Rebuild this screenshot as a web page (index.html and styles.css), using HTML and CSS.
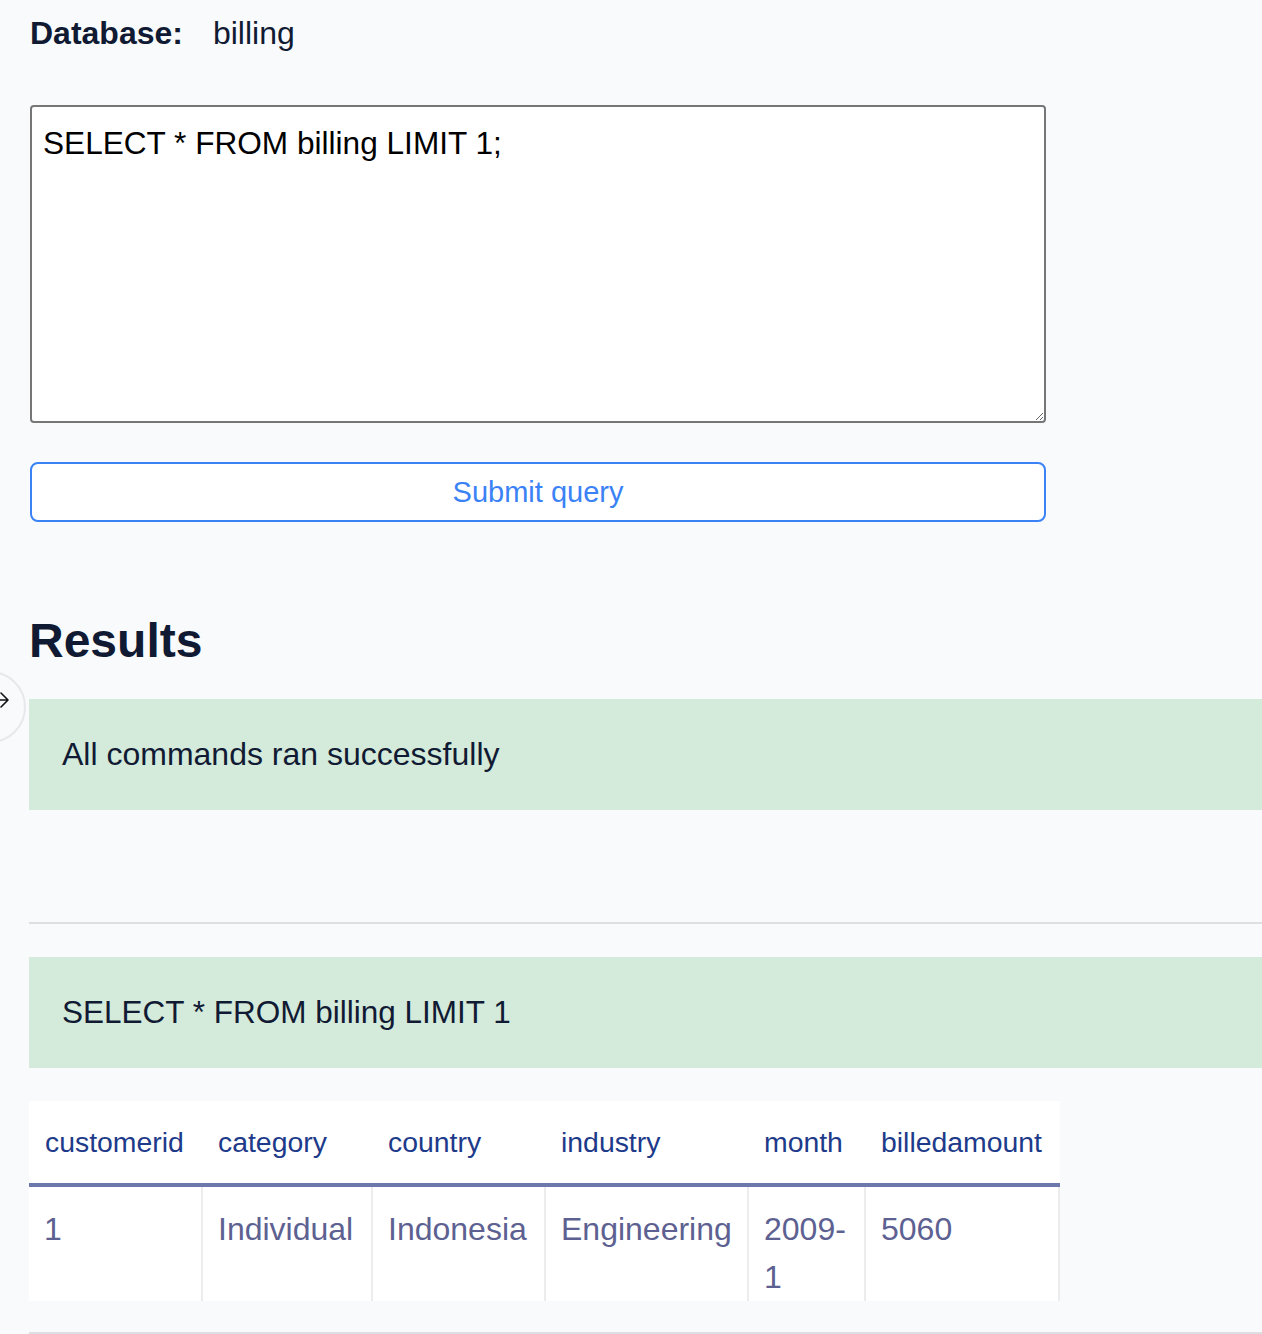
FILE: index.html
```html
<!DOCTYPE html>
<html lang="en">
<head>
<meta charset="utf-8">
<title>Query</title>
<link rel="stylesheet" href="styles.css">
</head>
<body>
<div class="side-toggle">
  <svg class="side-arrow" width="20" height="20" viewBox="0 0 20 20"><path d="M1 10 H17 M10 3 L17 10 L10 17" fill="none" stroke="#111" stroke-width="1.6" stroke-linecap="round" stroke-linejoin="round"/></svg>
</div>
<main class="page">
  <section class="form">
    <div class="db-line"><span class="db-label">Database:</span><span class="db-name">billing</span></div>
    <textarea class="query" spellcheck="false">SELECT * FROM billing LIMIT 1;</textarea>
    <button class="submit" type="button">Submit query</button>
  </section>
  <h1 class="results-title">Results</h1>
  <div class="notice">All commands ran successfully</div>
  <hr class="divider divider-1">
  <div class="notice notice-2">SELECT * FROM billing LIMIT 1</div>
  <table class="result-table">
    <colgroup>
      <col style="width:173px"><col style="width:170px"><col style="width:173px"><col style="width:203px"><col style="width:117px"><col style="width:194px">
    </colgroup>
    <thead>
      <tr><th>customerid</th><th>category</th><th>country</th><th>industry</th><th>month</th><th>billedamount</th></tr>
    </thead>
    <tbody>
      <tr><td>1</td><td>Individual</td><td>Indonesia</td><td>Engineering</td><td>2009-1</td><td>5060</td></tr>
    </tbody>
  </table>
  <hr class="divider divider-2">
</main>
</body>
</html>
```

FILE: styles.css
```css
html, body {
  margin: 0;
  padding: 0;
  background: #f9fafb;
}
body {
  font-family: "Liberation Sans", Arial, Helvetica, sans-serif;
  color: #111827;
  overflow: hidden;
  position: relative;
}
.page {
  padding-left: 29px;
  padding-top: 9px;
}
.form {
  margin-left: 1px;
  width: 1016px;
  display: flex;
  flex-direction: column;
}
.db-line {
  display: flex;
  gap: 30px;
  font-size: 32px;
  line-height: 48px;
  color: #111a33;
}
.db-label {
  font-weight: bold;
}
.query {
  margin-top: 48px;
  box-sizing: border-box;
  width: 1016px;
  height: 318px;
  border: 2px solid #767676;
  border-radius: 4px;
  background: #fff;
  padding: 12px 11px;
  font-family: "Liberation Sans", Arial, Helvetica, sans-serif;
  font-size: 31.6px;
  line-height: 48px;
  color: #000;
  resize: vertical;
  outline: none;
}
.submit {
  margin-top: 39px;
  box-sizing: border-box;
  width: 1016px;
  height: 60px;
  border: 2px solid #3b82f6;
  border-radius: 8px;
  background: #fff;
  color: #3b82f6;
  font-family: "Liberation Sans", Arial, Helvetica, sans-serif;
  font-size: 29px;
  padding: 0;
}
.results-title {
  margin: 89px 0 0;
  font-size: 48px;
  line-height: 60px;
  font-weight: bold;
  color: #111a33;
}
.notice {
  margin-top: 28px;
  background: #d4eadb;
  padding: 32px 33px;
  font-size: 32px;
  line-height: 47px;
  color: #111a33;
}
.notice-2 {
  margin-top: 33px;
  font-size: 31.5px;
}
.divider {
  border: 0;
  height: 2px;
  background: #dddfe3;
  margin: 0;
}
.divider-1 {
  margin-top: 112px;
}
.divider-2 {
  margin-top: 31px;
}
.result-table {
  margin-top: 33px;
  width: 1030px;
  table-layout: fixed;
  border-collapse: collapse;
  background: #fff;
}
.result-table th {
  text-align: left;
  font-weight: normal;
  font-size: 28.4px;
  line-height: 42px;
  color: #1e3a8a;
  padding: 20px 16px;
  border-bottom: 4px solid #6b77ad;
  white-space: nowrap;
}
.result-table td {
  font-size: 32px;
  line-height: 48px;
  color: #5d6191;
  padding: 18px 15px 0;
  vertical-align: top;
  border-left: 2px solid #ececec;
}
.result-table td:first-child {
  border-left: 0;
}
.result-table td:last-child {
  border-right: 2px solid #ececec;
}
.side-toggle {
  position: absolute;
  left: -46px;
  top: 671px;
  width: 68px;
  height: 68px;
  border: 2px solid #e7e8eb;
  border-radius: 50%;
  background: #f9fafb;
  z-index: 2;
}
.side-arrow {
  position: absolute;
  left: 35px;
  top: 17px;
}
```
